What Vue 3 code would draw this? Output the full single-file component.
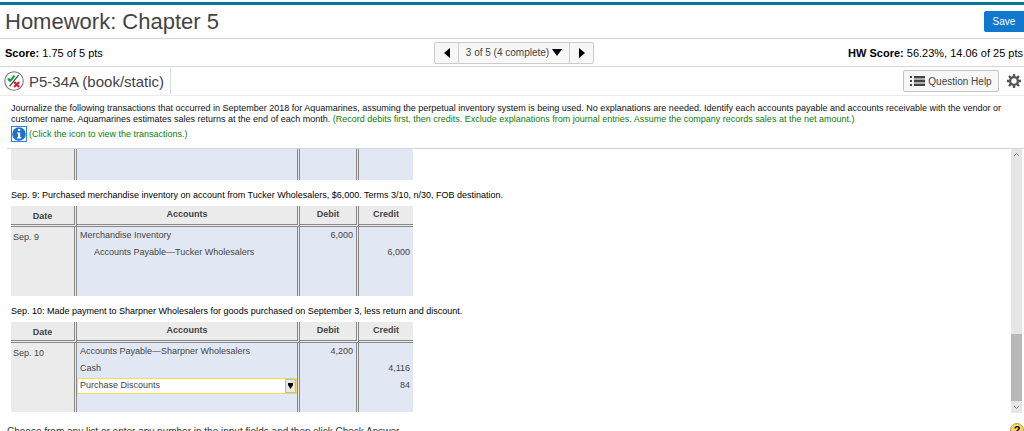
<script setup>
import { ref } from 'vue'

const account = ref('Purchase Discounts')

const entries = [
  {
    title: 'Sep. 9: Purchased merchandise inventory on account from Tucker Wholesalers, $6,000. Terms 3/10, n/30, FOB destination.',
    date: 'Sep. 9',
    rows: [
      { account: 'Merchandise Inventory', debit: '6,000', credit: '' },
      { account: 'Accounts Payable—Tucker Wholesalers', indent: true, debit: '', credit: '6,000' },
      { account: '', debit: '', credit: '' },
      { account: '', debit: '', credit: '' }
    ]
  },
  {
    title: 'Sep. 10: Made payment to Sharpner Wholesalers for goods purchased on September 3, less return and discount.',
    date: 'Sep. 10',
    rows: [
      { account: 'Accounts Payable—Sharpner Wholesalers', debit: '4,200', credit: '' },
      { account: 'Cash', debit: '', credit: '4,116' },
      { select: true, debit: '', credit: '84' },
      { account: '', debit: '', credit: '' }
    ]
  }
]
</script>

<template>
  <div class="page">
    <header class="top">
      <h1>Homework: Chapter 5</h1>
      <button class="save" type="button">Save</button>
    </header>

    <div class="score-row">
      <div><b>Score:</b> 1.75 of 5 pts</div>
      <nav class="pager">
        <button type="button" aria-label="Previous question">
          <svg width="6" height="10" viewBox="0 0 6 10"><path d="M6 0v10L0 5z" /></svg>
        </button>
        <button type="button" class="current">
          3 of 5 (4 complete)
          <svg width="10" height="7" viewBox="0 0 10 7"><path d="M0 0h10L5 7z" /></svg>
        </button>
        <button type="button" aria-label="Next question">
          <svg width="6" height="10" viewBox="0 0 6 10"><path d="M0 0v10l6-5z" /></svg>
        </button>
      </nav>
      <div class="hw"><b>HW Score:</b> 56.23%, 14.06 of 25 pts</div>
    </div>

    <div class="question-row">
      <h2>
        <svg width="20" height="20" viewBox="0 0 20 20" fill="none">
          <circle cx="10" cy="10" r="9.3" fill="#fff" stroke="#777" stroke-width="1.1" />
          <path d="M14.6 4.2L5.6 15.4" stroke="#444" stroke-width="1.2" />
          <path d="M4 7.6l2.2 2.2L10.6 4.6" stroke="#16a34f" stroke-width="2.2" />
          <path d="M10.2 11l5 5M15.2 11l-5 5" stroke="#dc1f2e" stroke-width="2.2" />
        </svg>
        P5-34A (book/static)
      </h2>
      <button class="help" type="button">
        <svg width="15" height="10" viewBox="0 0 15 10" fill="#444">
          <path d="M0 0h2v2H0zM4 0h11v2H4zM0 4h2v2H0zM4 4h11v2H4zM0 8h2v2H0zM4 8h11v2H4z" />
          <path d="M4 2h11v2H4zM4 6h11v2H4z" opacity=".4" />
        </svg>
        Question Help
      </button>
      <button class="gear" type="button" aria-label="Settings">
        <svg width="14" height="14" viewBox="0 0 14 14" fill="none" stroke="#555">
          <circle cx="7" cy="7" r="3.9" stroke-width="2.4" />
          <path d="M7 0v2.4M7 11.6V14M0 7h2.4M11.6 7H14M2 2l1.8 1.8M10.2 10.2L12 12M12 2l-1.8 1.8M3.8 10.2L2 12" stroke-width="2.4" />
        </svg>
      </button>
    </div>

    <section class="prompt">
      <p>
        Journalize the following transactions that occurred in September 2018 for Aquamarines, assuming the perpetual inventory system is being used. No explanations are needed. Identify each accounts payable and accounts receivable with the vendor or
        <br />customer name. Aquamarines estimates sales returns at the end of each month. <span class="green">(Record debits first, then credits. Exclude explanations from journal entries. Assume the company records sales at the net amount.)</span>
      </p>
      <a href="#" class="info">
        <svg width="16" height="16" viewBox="0 0 16 16">
          <rect x=".5" y=".5" width="15" height="15" fill="#fff" stroke="#2a86dc" />
          <circle cx="8" cy="8" r="6.8" fill="#1f70cf" />
          <path d="M7 3h2.2v2.1H7zM6 6.4h3.2v4.7h1V12.5H6v-1.4h1V7.7H6z" fill="#fff" />
        </svg>
        (Click the icon to view the transactions.)
      </a>
    </section>

    <main class="pane">
      <div class="journal">
        <table class="tail">
          <tbody>
            <tr><td class="date"></td><td class="acct"></td><td class="debit"></td><td class="credit"></td></tr>
          </tbody>
        </table>

        <section v-for="entry in entries" :key="entry.date">
          <p class="entry-title">{{ entry.title }}</p>
          <table>
            <thead>
              <tr>
                <th class="date">Date</th>
                <th class="acct">Accounts</th>
                <th class="debit">Debit</th>
                <th class="credit">Credit</th>
              </tr>
            </thead>
            <tbody>
              <tr v-for="(row, i) in entry.rows" :key="i">
                <td v-if="i === 0" class="date" :rowspan="entry.rows.length">{{ entry.date }}</td>
                <td class="acct" :class="{ indent: row.indent, picker: row.select }">
                  <label v-if="row.select" class="select-box">
                    <select v-model="account" aria-label="Account">
                      <option>Purchase Discounts</option>
                      <option>Cash</option>
                      <option>Merchandise Inventory</option>
                    </select>
                    <span class="arrow">
                      <svg width="5" height="6" viewBox="0 0 5 6"><path d="M0 0h5v2L2.5 6L0 2z" /></svg>
                    </span>
                  </label>
                  <template v-else>{{ row.account }}</template>
                </td>
                <td class="debit">{{ row.debit }}</td>
                <td class="credit">{{ row.credit }}</td>
              </tr>
            </tbody>
          </table>
        </section>
      </div>

      <div class="scrollbar">
        <svg width="11" height="12" viewBox="0 0 11 12"><path d="M3 7l2.5-2.5L8 7" /></svg>
        <span class="thumb"></span>
        <svg width="11" height="12" viewBox="0 0 11 12"><path d="M3 5l2.5 2.5L8 5" /></svg>
      </div>
    </main>

    <footer>
      <p>Choose from any list or enter any number in the input fields and then click Check Answer.</p>
      <button type="button" aria-label="Help">?</button>
    </footer>
  </div>
</template>

<style>
body {
  margin: 0;
  background: #fff;
  overflow: hidden;
}
</style>

<style scoped>
.page {
  display: flex;
  flex-direction: column;
  box-sizing: border-box;
  height: 100vh;
  padding-top: 2px;
  overflow: hidden;
  font-family: "Liberation Sans", Arial, sans-serif;
  font-size: 9px;
  color: #111;
}
h1, h2, p {
  margin: 0;
  font-weight: normal;
}
button {
  font: inherit;
  margin: 0;
  padding: 0;
  border: 0;
  background: none;
}
.top {
  display: flex;
  align-items: center;
  justify-content: space-between;
  height: 33px;
  border-top: 3px solid #00779b;
  border-bottom: 1px solid #cfd6e2;
}
h1 {
  padding-left: 5px;
  font-size: 22px;
  color: #444;
}
.save {
  width: 40px;
  height: 21px;
  border-radius: 2px 0 0 2px;
  background: #1079cd;
  color: #fff;
  font-size: 10px;
}
.score-row {
  display: grid;
  grid-template-columns: 1fr auto 1fr;
  align-items: center;
  height: 27px;
  padding: 0 1px 0 5px;
  border-bottom: 1px solid #cfd6e2;
  font-size: 11px;
  color: #000;
}
.hw {
  text-align: right;
}
.pager {
  display: flex;
  height: 22px;
  box-sizing: border-box;
  border: 1px solid #ccc;
  border-radius: 2px;
  background: #f7f7f7;
  font-size: 10px;
}
.pager button {
  display: flex;
  align-items: center;
  justify-content: center;
  gap: 3px;
  width: 23px;
  color: #444;
}
.pager .current {
  width: 112px;
  border: solid #ccc;
  border-width: 0 1px;
}
.question-row {
  display: flex;
  align-items: center;
  height: 28px;
  border-bottom: 1px solid #e9ebf1;
}
h2 {
  display: flex;
  align-items: center;
  gap: 5px;
  height: 26px;
  margin-right: auto;
  padding: 0 6px 0 4px;
  border-right: 1px solid #d5d9e4;
  font-size: 15px;
  color: #444;
}
.help {
  display: flex;
  align-items: center;
  justify-content: center;
  gap: 3px;
  box-sizing: border-box;
  width: 96px;
  height: 22px;
  border: 1px solid #c4c4c4;
  border-radius: 2px;
  background: #f7f7f7;
  font-size: 10px;
  color: #444;
}
.gear {
  display: flex;
  padding: 0 3px 0 8px;
}
.prompt {
  box-sizing: border-box;
  height: 52px;
  padding: 7px 0 0 11px;
  line-height: 11px;
  white-space: nowrap;
}
.green, .info {
  color: #0b7d0b;
}
.info {
  display: flex;
  align-items: center;
  gap: 2px;
  margin-top: 1px;
  text-decoration: none;
}
.pane {
  display: flex;
  flex: 1;
  min-height: 0;
  margin-left: 7px;
  border-top: 1px solid #cfd6e2;
}
.journal {
  flex: 1;
  padding-left: 4px;
  overflow: hidden;
}
table {
  table-layout: fixed;
  width: 402px;
  border-spacing: 0;
  color: #444;
}
th, td {
  box-sizing: border-box;
  height: 17px;
  padding: 0 3px;
  border-right: 3px double #888;
  line-height: 11px;
}
tbody tr:last-child td:not(.date) {
  height: 18px;
}
th {
  height: 21px;
  padding: 0 0 1px;
  border-bottom: 3px double #888;
  background: #ebebeb;
  text-align: center;
}
th.date {
  padding: 3px 0 0;
}
td {
  background: #e2e8f3;
  text-align: left;
}
td.date {
  padding: 5px 2px;
  background: #ebebeb;
  vertical-align: top;
}
.date {
  width: 66px;
}
.acct {
  width: 223px;
}
.debit {
  width: 59px;
}
.credit {
  width: 54px;
  border-right: 0;
}
td.debit, td.credit {
  text-align: right;
}
td.indent {
  padding-left: 17px;
}
.tail td, .tail tbody tr:last-child td:not(.date) {
  height: 31px;
}
td.picker {
  padding: 0;
}
.select-box {
  display: flex;
  box-sizing: border-box;
  height: 16px;
  border: 1px solid #ffdc4e;
  background: #fff;
}
select {
  flex: 1;
  min-width: 0;
  padding: 0 2px;
  border: 0;
  appearance: none;
  background: none;
  font: inherit;
  color: #444;
}
.arrow {
  display: flex;
  align-items: center;
  justify-content: center;
  width: 9px;
  border: 1px solid #bbb;
  background: #e8e8e8;
}
.entry-title {
  padding: 10px 0 5px;
  line-height: 11px;
  white-space: nowrap;
  color: #000;
}
.scrollbar {
  display: flex;
  flex-direction: column;
  width: 11px;
  margin-right: 2px;
  background: #e6e6e6;
}
.scrollbar svg {
  fill: none;
  stroke: #888;
}
.thumb {
  height: 67px;
  margin-top: auto;
  background: #b8b8b8;
}
footer {
  display: flex;
  justify-content: space-between;
  height: 18px;
  overflow: hidden;
  font-size: 10px;
  color: #333;
}
footer p {
  padding: 13px 0 0 7px;
  line-height: 12px;
}
footer button {
  flex-shrink: 0;
  width: 14px;
  height: 14px;
  margin: 10px 0 0;
  border: 1px solid #b89b4a;
  border-radius: 50%;
  background: #ffd768;
  font-size: 11px;
  font-weight: bold;
  line-height: 12px;
}
</style>
